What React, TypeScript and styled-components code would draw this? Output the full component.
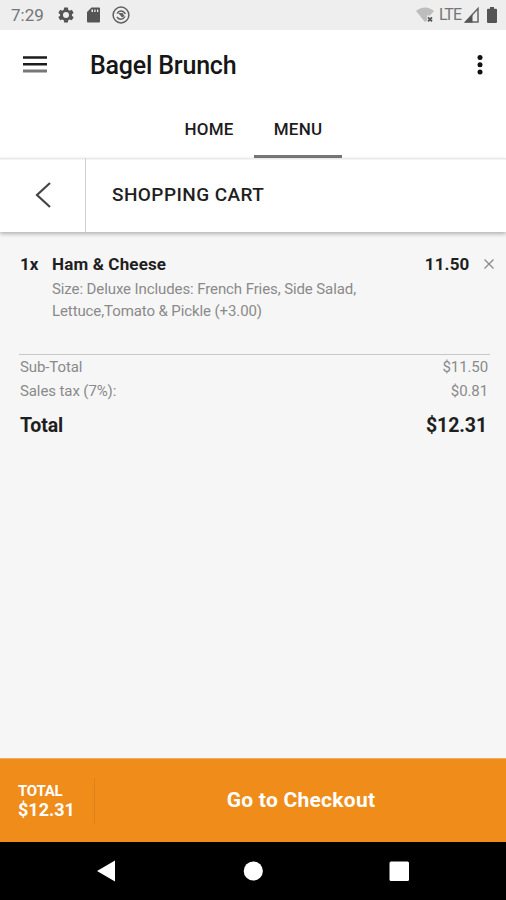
import React from "react";
import styled, { createGlobalStyle } from "styled-components";

const GlobalStyle = createGlobalStyle`
  * { box-sizing: border-box; }
  body { margin: 0; background: #f6f6f6; }
  button { font: inherit; color: inherit; border: 0; padding: 0; background: none; }
`;

const Screen = styled.div`
  display: flex;
  flex-direction: column;
  width: 506px;
  height: 900px;
  overflow: hidden;
  background: #f6f6f6;
  color: #1f1f1f;
  font-family: Roboto, "Liberation Sans", sans-serif;
`;

const StatusBar = styled.div`
  display: flex;
  flex: none;
  align-items: center;
  justify-content: space-between;
  height: 30px;
  padding: 0 9px 0 11px;
  background: #eeeeee;
  color: #757575;
`;

const StatusGroup = styled.div`
  display: flex;
  align-items: center;
  height: 30px;
`;

const Clock = styled.span`
  width: 46px;
  font-size: 17px;
  line-height: 30px;
`;

const Network = styled.span`
  margin: 0 3px 0 5px;
  font-size: 16px;
  line-height: 30px;
  letter-spacing: -1px;
`;

const StatusIcon = styled.svg<{ $gap?: number }>`
  display: block;
  flex: none;
  margin-left: ${(p) => p.$gap ?? 0}px;
`;

const AppBar = styled.header`
  display: flex;
  flex: none;
  align-items: center;
  height: 70px;
  padding: 0 22px 0 23px;
  background: #ffffff;
`;

const IconButton = styled.button`
  display: flex;
  flex: none;
  svg { display: block; }
`;

const AppTitle = styled.h1`
  flex: 1;
  margin: 0 0 0 43px;
  padding-top: 1px;
  font-size: 25px;
  font-weight: 500;
  line-height: 30px;
  letter-spacing: -0.2px;
  color: #161616;
`;

const Tabs = styled.nav`
  display: flex;
  flex: none;
  justify-content: center;
  height: 58px;
  background: #ffffff;
`;

const Tab = styled.button<{ $active?: boolean }>`
  width: 88px;
  height: 58px;
  margin-left: 1px;
  padding-top: 3px;
  border-bottom: 3px solid ${(p) => (p.$active ? "#777777" : "transparent")};
  font-size: 17px;
  font-weight: 500;
  line-height: 20px;
  letter-spacing: 0.2px;
  color: #1c1c1c;
`;

const TitleBar = styled.div`
  display: flex;
  flex: none;
  height: 74px;
  background: linear-gradient(#e9e9e9 0 1px, #f4f4f4 1px 2px, #ffffff 2px);
  box-shadow: 0 2px 4px rgba(0, 0, 0, 0.28);
`;

const BackButton = styled.button`
  display: flex;
  align-items: center;
  justify-content: center;
  width: 86px;
  border-right: 1px solid #d2d2d2;
`;

const PageTitle = styled.h2`
  margin: 0 0 0 26px;
  font-size: 19px;
  font-weight: 500;
  line-height: 73px;
  letter-spacing: 0.43px;
`;

const Cart = styled.main`
  flex: 1;
  padding: 20px 16px 0 19px;
`;

const Item = styled.section`
  display: flex;
  height: 103px;
  border-bottom: 1px solid #c8c8c8;
`;

const Quantity = styled.span`
  width: 33px;
  padding-left: 1px;
  font-size: 17px;
  font-weight: 700;
  line-height: 25px;
`;

const ItemBody = styled.div`
  flex: 1;
`;

const ItemName = styled.h3`
  margin: 0;
  font-size: 17px;
  font-weight: 700;
  line-height: 25px;
  letter-spacing: 0.15px;
`;

const ItemOptions = styled.p`
  margin: 1px 0 0;
  font-size: 15px;
  line-height: 22px;
  letter-spacing: -0.1px;
  white-space: nowrap;
  color: #8a8a8a;
`;

const ItemPrice = styled.span`
  font-size: 17px;
  font-weight: 700;
  line-height: 25px;
  letter-spacing: 0.15px;
`;

const RemoveButton = styled.button`
  display: flex;
  align-items: center;
  height: 24px;
  margin: 0 -3.500px 0 14px;
`;

const SummaryRow = styled.div`
  display: flex;
  justify-content: space-between;
  padding: 0 2px 0 1px;
  font-size: 15px;
  line-height: 24px;
  letter-spacing: -0.1px;
  color: #8a8a8a;
`;

const TotalRow = styled(SummaryRow)`
  padding-top: 11px;
  padding-right: 3px;
  font-size: 19.5px;
  font-weight: 700;
  color: #1f1f1f;
`;

const CheckoutBar = styled.footer`
  display: flex;
  flex: none;
  align-items: center;
  height: 84px;
  background: #ef8c1a;
  border-top: 1px solid #f3ad62;
  color: #ffffff;
`;

const CheckoutTotal = styled.div`
  display: flex;
  flex-direction: column;
  justify-content: center;
  width: 95px;
  height: 46px;
  padding-left: 18px;
  border-right: 1px solid #dc831b;
  font-weight: 700;
`;

const CheckoutLabel = styled.span`
  font-size: 15px;
  line-height: 18px;
  letter-spacing: -0.25px;
`;

const CheckoutAmount = styled.span`
  font-size: 18px;
  line-height: 19px;
`;

const CheckoutButton = styled.button`
  flex: 1;
  padding: 0 0 2px 1px;
  text-align: center;
  font-size: 21px;
  font-weight: 700;
  line-height: 28px;
  letter-spacing: 0.25px;
`;

const SystemNav = styled.div`
  display: flex;
  flex: none;
  justify-content: space-between;
  align-items: center;
  height: 58px;
  padding: 0 96px;
  background: #000000;
`;

const taxes = [
  { label: "Sub-Total", value: "$11.50" },
  { label: "Sales tax (7%):", value: "$0.81" },
];

export default function App() {
  return (
    <Screen>
      <GlobalStyle />
      <StatusBar>
        <StatusGroup>
          <Clock>7:29</Clock>
          <StatusIcon width="18" height="18" viewBox="0 0 24 24" fill="#555">
            <path fillRule="evenodd" d="M9.5 2h5l.5 3 2 1.2 2.8-1.1 2.4 4.2-2.3 1.8v2l2.3 1.8-2.4 4.2-2.8-1.1L15 19l-.5 3h-5L9 19l-2-1.1-2.8 1.1-2.4-4.2 2.3-1.8v-2L1.8 9.3l2.4-4.2L7 6.2 9 5zM12 8a4 4 0 1 0 0 8 4 4 0 0 0 0-8z" />
          </StatusIcon>
          <StatusIcon $gap={12} width="13" height="16" viewBox="0 0 13 16" fill="#555">
            <path fillRule="evenodd" d="M4.5 .5H12a1 1 0 0 1 1 1v13a1 1 0 0 1-1 1H1a1 1 0 0 1-1-1V5zM4.5 2.5v2.5H6v-2.5zM7.3 2.5v2.5h1.3v-2.5zM10 2.5v2.5h1.3v-2.5z" />
          </StatusIcon>
          <StatusIcon $gap={12} width="18" height="18" viewBox="0 0 18 18" fill="none" stroke="#606060">
            <circle cx="9" cy="9" r="7.9" strokeWidth="1.5" />
            <path d="M5 7.5C7 4 11.5 4 13.3 8M13 10.5C11 14 7 14 5 11" strokeWidth="1.5" />
            <path d="M6 7h4.5l2 3-2.5 1.5-2-2.5z" fill="#606060" stroke="none" />
          </StatusIcon>
        </StatusGroup>
        <StatusGroup>
          <StatusIcon width="18" height="16" viewBox="0 0 18 16">
            <path d="M0 4C5-.8 13-.8 18 4l-4 4.500H11v5L9 15z" fill="#bdbdbd" />
            <path d="M12 10.300l4 4m0-4l-4 4" stroke="#555" strokeWidth="1.800" />
          </StatusIcon>
          <Network>LTE</Network>
          <StatusIcon width="15" height="16" viewBox="0 0 15 16">
            <path d="M1.500 15L14 1.500V15z" fill="none" stroke="#666" strokeWidth="1.500" />
            <path d="M.5 15.500L8.500 7v8.500z" fill="#555" />
          </StatusIcon>
          <StatusIcon $gap={8} width="10" height="16" viewBox="0 0 10 16" fill="#555">
            <path d="M3 0h4v1.800h2a1 1 0 0 1 1 1V15a1 1 0 0 1-1 1H1a1 1 0 0 1-1-1V2.800a1 1 0 0 1 1-1h2z" />
          </StatusIcon>
        </StatusGroup>
      </StatusBar>

      <AppBar>
        <IconButton aria-label="Open menu">
          <svg width="24" height="18" viewBox="0 0 24 18">
            <path d="M0 1.500h24M0 8.300h24" stroke="#1c1c1c" strokeWidth="2.500" />
            <path d="M0 15h24" stroke="#777" strokeWidth="3" />
          </svg>
        </IconButton>
        <AppTitle>Bagel Brunch</AppTitle>
        <IconButton aria-label="More options">
          <svg width="8" height="20" viewBox="0 0 8 20" fill="#111">
            <circle cx="4" cy="2.500" r="2.500" />
            <circle cx="4" cy="9.700" r="2.500" />
            <circle cx="4" cy="16.900" r="2.500" />
          </svg>
        </IconButton>
      </AppBar>

      <Tabs>
        <Tab>HOME</Tab>
        <Tab $active>MENU</Tab>
      </Tabs>

      <TitleBar>
        <BackButton aria-label="Back">
          <svg width="16" height="26" viewBox="0 0 16 26" fill="none" stroke="#444" strokeWidth="2.200">
            <path d="M15 1L2 13l13 12" />
          </svg>
        </BackButton>
        <PageTitle>SHOPPING CART</PageTitle>
      </TitleBar>

      <Cart>
        <Item>
          <Quantity>1x</Quantity>
          <ItemBody>
            <ItemName>Ham &amp; Cheese</ItemName>
            <ItemOptions>
              Size: Deluxe Includes: French Fries, Side Salad,
              <br />
              Lettuce,Tomato &amp; Pickle (+3.00)
            </ItemOptions>
          </ItemBody>
          <ItemPrice>11.50</ItemPrice>
          <RemoveButton aria-label="Remove item">
            <svg width="10" height="10" viewBox="0 0 10 10" stroke="#8a8a8a" strokeWidth="1.300">
              <path d="M.5.5l9 9m0-9l-9 9" />
            </svg>
          </RemoveButton>
        </Item>
        {taxes.map((row) => (
          <SummaryRow key={row.label}>
            <span>{row.label}</span>
            <span>{row.value}</span>
          </SummaryRow>
        ))}
        <TotalRow>
          <span>Total</span>
          <span>$12.31</span>
        </TotalRow>
      </Cart>

      <CheckoutBar>
        <CheckoutTotal>
          <CheckoutLabel>TOTAL</CheckoutLabel>
          <CheckoutAmount>$12.31</CheckoutAmount>
        </CheckoutTotal>
        <CheckoutButton>Go to Checkout</CheckoutButton>
      </CheckoutBar>

      <SystemNav>
        <IconButton aria-label="System back">
          <svg width="20" height="22" viewBox="0 0 20 22" fill="#fff">
            <path d="M19 .5v21L1 11z" />
          </svg>
        </IconButton>
        <IconButton aria-label="System home">
          <svg width="20" height="20" viewBox="0 0 20 20" fill="#fff">
            <circle cx="10.300" cy="10" r="9.600" />
          </svg>
        </IconButton>
        <IconButton aria-label="Recent apps">
          <svg width="21" height="20" viewBox="0 0 21 20" fill="#fff">
            <rect x=".5" y=".5" width="19.500" height="19.500" rx="1.500" />
          </svg>
        </IconButton>
      </SystemNav>
    </Screen>
  );
}
